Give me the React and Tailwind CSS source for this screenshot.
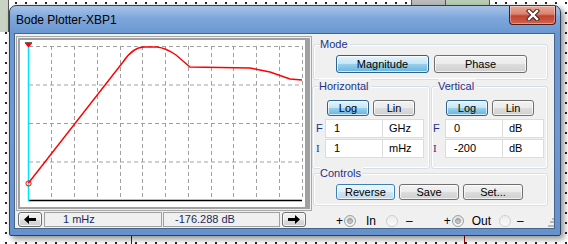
import React from "react";

const btnBase =
  "flex items-center justify-center rounded-[3px] border text-[11px] text-black leading-none shadow-[inset_0_0_0_1px_rgba(255,255,255,0.7)]";
const btnGray =
  btnBase +
  " border-[#707070] bg-[linear-gradient(#f2f2f2_0%,#ebebeb_50%,#dddddd_50%,#cfcfcf_100%)]";
const btnBlue =
  btnBase +
  " border-[#2c628b] bg-[linear-gradient(#e5f4fc_0%,#c4e5f6_50%,#98d1ef_50%,#68b3db_100%)]";
const btnDefault =
  btnBase +
  " border-[#3c7fb1] bg-[linear-gradient(#eaf6fd_0%,#e0eef7_50%,#cfe4f0_50%,#c0d8e8_100%)] shadow-[inset_0_0_0_1px_rgba(160,220,255,0.9)]";

function Group({ label, className, children }) {
  return (
    <div className={"relative rounded-[3px] border border-[#d5dfe5] shadow-[inset_0_0_0_1px_#ffffff] " + className}>
      <span className="absolute left-[6px] top-[-8px] bg-[#f0f0f0] pr-[2px] text-[11px] leading-[14px] text-[#1e3287]">
        {label}
      </span>
      {children}
    </div>
  );
}

function Field({ value, unit }) {
  return (
    <div className="flex h-[19px]">
      <div className="flex w-[58px] items-center border border-[#dcdcdc] bg-white pl-[8px] text-[11px] text-black">
        {value}
      </div>
      <div className="ml-[-1px] flex w-[42px] items-center border border-[#dcdcdc] bg-white pl-[6px] text-[11px] text-black">
        {unit}
      </div>
    </div>
  );
}

function Radio({ on }) {
  return (
    <div
      className={
        "flex h-[12px] w-[12px] items-center justify-center rounded-full border " +
        (on
          ? "border-[#a0a0a0] bg-[linear-gradient(#e0e0e0,#f6f6f6)]"
          : "border-[#cfcfcf] bg-[linear-gradient(#ececec,#fafafa)]")
      }
    >
      {on && <div className="h-[6px] w-[6px] rounded-full border border-[#9a9a9a] bg-[linear-gradient(#a8a8a8,#d8d8d8)]" />}
    </div>
  );
}

function Arrow({ dir }) {
  return (
    <svg width="12" height="9" viewBox="0 0 12 9">
      {dir === "left" ? (
        <path d="M0 4.5 L5 0 V3 H12 V6 H5 V9 Z" fill="#000" />
      ) : (
        <path d="M12 4.5 L7 0 V3 H0 V6 H7 V9 Z" fill="#000" />
      )}
    </svg>
  );
}

function Plot() {
  const xs = [];
  for (let k = 1; k <= 12; k++) xs.push(8.5 + 22.75 * k);
  const ys = [6.5, 45, 83.5, 122];
  return (
    <svg width="286" height="169" viewBox="0 0 286 169" className="block">
      {xs.map((x, i) => (
        <line key={"x" + i} x1={Math.round(x) + 0.5} y1="6" x2={Math.round(x) + 0.5} y2="160" stroke="#a0a0a0" strokeWidth="1" strokeDasharray="4 3" />
      ))}
      {ys.map((y, i) => (
        <line key={"y" + i} x1="9" y1={y} x2="282" y2={y} stroke="#a0a0a0" strokeWidth="1" strokeDasharray="4 3" />
      ))}
      <line x1="8" y1="160.5" x2="282" y2="160.5" stroke="#000" strokeWidth="1.5" />
      <line x1="8.5" y1="3" x2="8.5" y2="161" stroke="#00e5ff" strokeWidth="1.5" />
      <line x1="5" y1="3" x2="12" y2="3" stroke="#000" strokeWidth="1.2" />
      <path d="M5 3.5 L12 3.5 L8.5 7.5 Z" fill="#ff0000" />
      <path
        d="M8.5 143 L103 22 Q113 7 124 7 L137 7 Q146 8 156 15 L170 27 L230 28 L250 32 L270 39 L282 40"
        fill="none"
        stroke="#ff0000"
        strokeWidth="1.4"
      />
      <circle cx="8.5" cy="143.5" r="2.6" fill="none" stroke="#ff0000" strokeWidth="1" />
    </svg>
  );
}

export default function App() {
  return (
    <div className="relative h-[244px] w-[568px] overflow-hidden bg-white bg-[radial-gradient(circle,#222_0.7px,transparent_1.1px)] bg-[length:10px_10px] bg-[position:1px_-2px] font-['Liberation_Sans',Arial,sans-serif]">
      {/* background schematic bits */}
      <div className="absolute left-0 top-0 h-[32px] w-[9px] border-r border-[#555] bg-[#c9d3c3]" />
      <div className="absolute left-[411px] top-0 h-[5px] w-[35px] border-x border-[#555] bg-[#bcbcbc]" />
      <div className="absolute left-[446px] top-0 h-[5px] w-[44px] border-r border-[#555] bg-[#b9cdb4]" />
      <div className="absolute left-[131px] top-[236px] h-[8px] w-[1px] bg-[#8b0000]" />
      <div className="absolute left-[464px] top-[236px] h-[8px] w-[1px] bg-[#8b0000]" />

      {/* window */}
      <div className="absolute left-[9px] top-[5px] flex h-[231px] w-[552px] flex-col rounded-t-[7px] rounded-b-[2px] border border-[#2f3f58] bg-[linear-gradient(180deg,#a9c3e6_0px,#7ea6da_12px,#6a97d1_28px,#6e99d2_120px,#6591cc_231px)] shadow-[3px_3px_6px_rgba(0,0,0,0.45)]">
        {/* title bar */}
        <div className="flex h-[27px] shrink-0">
          <span className="self-center pl-[6px] pt-[1px] text-[12px] text-black">Bode Plotter-XBP1</span>
          <div className="ml-auto mr-[4px] flex h-[19px] w-[47px] items-center justify-center rounded-b-[4px] border border-t-0 border-[#4a1e1a] bg-[linear-gradient(#e9a99a_0%,#d98270_45%,#c2422d_55%,#d0644f_100%)] shadow-[inset_0_0_0_1px_rgba(255,255,255,0.35)]">
            <svg width="14" height="12" viewBox="0 0 14 12">
              <path d="M3 2 L11 10 M11 2 L3 10" stroke="#40201c" strokeWidth="4.4" strokeLinecap="square" />
              <path d="M3 2 L11 10 M11 2 L3 10" stroke="#ffffff" strokeWidth="2.4" strokeLinecap="square" />
            </svg>
          </div>
        </div>

        {/* client */}
        <div className="ml-[4px] mr-[5px] flex h-[196px] border border-[#47638a] bg-[#f0f0f0]">
          {/* left column */}
          <div className="flex w-[297px] flex-col">
            <div className="ml-[1px] mt-[2px] h-[175px] w-[296px] border border-[#a8a8a8] p-[1px]">
              <div className="h-full w-full border-2 border-l-[2px] border-[#a0a0a0] border-r-[5px] bg-white">
                <Plot />
              </div>
            </div>
            <div className="ml-[3px] mt-[1px] flex h-[15px] items-stretch">
              <div className={btnGray + " w-[24px]"}>
                <Arrow dir="left" />
              </div>
              <div className="ml-[2px] flex w-[118px] items-center border border-[#a0a0a0] pl-[18px] text-[11px] text-[#1c2a5a]">
                1 mHz
              </div>
              <div className="ml-[1px] flex w-[117px] items-center border border-[#a0a0a0] pl-[11px] text-[11px] text-[#1c2a5a]">
                -176.288 dB
              </div>
              <div className={btnGray + " ml-[2px] w-[24px]"}>
                <Arrow dir="right" />
              </div>
            </div>
          </div>

          {/* right column */}
          <div className="flex w-[236px] flex-col">
            <Group label="Mode" className="ml-[1px] mt-[10px] h-[36px] w-[235px]">
              <div className="ml-[22px] mt-[10px] flex gap-[5px]">
                <div className={btnBlue + " h-[18px] w-[93px]"}>Magnitude</div>
                <div className={btnGray + " h-[18px] w-[93px]"}>Phase</div>
              </div>
            </Group>

            <div className="mt-[6px] flex h-[83px] gap-[1px]">
              <Group label="Horizontal" className="w-[118px]">
                <div className="ml-[14px] mt-[13px] flex gap-[4px]">
                  <div className={btnBlue + " h-[16px] w-[42px]"}>Log</div>
                  <div className={btnGray + " h-[16px] w-[42px]"}>Lin</div>
                </div>
                <div className="mt-[3px] flex flex-col gap-[1px]">
                  <div className="flex items-center">
                    <span className="w-[12px] pl-[3px] text-[11px] text-[#1e3287]">F</span>
                    <Field value="1" unit="GHz" />
                  </div>
                  <div className="flex items-center">
                    <span className="w-[12px] pl-[3px] font-['Liberation_Serif',serif] text-[11px] text-[#1e3287]">I</span>
                    <Field value="1" unit="mHz" />
                  </div>
                </div>
              </Group>
              <Group label="Vertical" className="w-[117px]">
                <div className="ml-[14px] mt-[13px] flex gap-[4px]">
                  <div className={btnBlue + " h-[16px] w-[42px]"}>Log</div>
                  <div className={btnGray + " h-[16px] w-[42px]"}>Lin</div>
                </div>
                <div className="mt-[3px] flex flex-col gap-[1px]">
                  <div className="flex items-center">
                    <span className="w-[13px] pl-[1px] text-[11px] text-[#1e3287]">F</span>
                    <Field value="0" unit="dB" />
                  </div>
                  <div className="flex items-center">
                    <span className="w-[13px] pl-[1px] font-['Liberation_Serif',serif] text-[11px] text-[#1e3287]">I</span>
                    <Field value="-200" unit="dB" />
                  </div>
                </div>
              </Group>
            </div>

            <Group label="Controls" className="ml-[1px] mt-[4px] h-[33px] w-[235px]">
              <div className="ml-[22px] mt-[10px] flex gap-[4px]">
                <div className={btnDefault + " h-[16px] w-[59px]"}>Reverse</div>
                <div className={btnGray + " h-[16px] w-[60px]"}>Save</div>
                <div className={btnGray + " h-[16px] w-[60px]"}>Set...</div>
              </div>
            </Group>

            <div className="mt-[8px] flex h-[13px] items-center text-[12px] text-black">
              <span className="ml-[24px]">+</span>
              <span className="ml-[1px]"><Radio on /></span>
              <span className="ml-[10px]">In</span>
              <span className="ml-[10px]"><Radio /></span>
              <span className="ml-[8px]">–</span>
              <span className="ml-[31px]">+</span>
              <span className="ml-[1px]"><Radio on /></span>
              <span className="ml-[8px]">Out</span>
              <span className="ml-[8px]"><Radio /></span>
              <span className="ml-[6px]">–</span>
            </div>
          </div>

          {/* grip */}
          <div className="mt-auto mb-[1px] ml-auto mr-[1px] grid h-[9px] w-[9px] grid-cols-3 gap-[1px]">
            <span />
            <span />
            <span className="h-[2px] w-[2px] bg-[#b8b8b8]" />
            <span />
            <span className="h-[2px] w-[2px] bg-[#b8b8b8]" />
            <span className="h-[2px] w-[2px] bg-[#b8b8b8]" />
            <span className="h-[2px] w-[2px] bg-[#b8b8b8]" />
            <span className="h-[2px] w-[2px] bg-[#b8b8b8]" />
            <span className="h-[2px] w-[2px] bg-[#b8b8b8]" />
          </div>
        </div>
      </div>
    </div>
  );
}
